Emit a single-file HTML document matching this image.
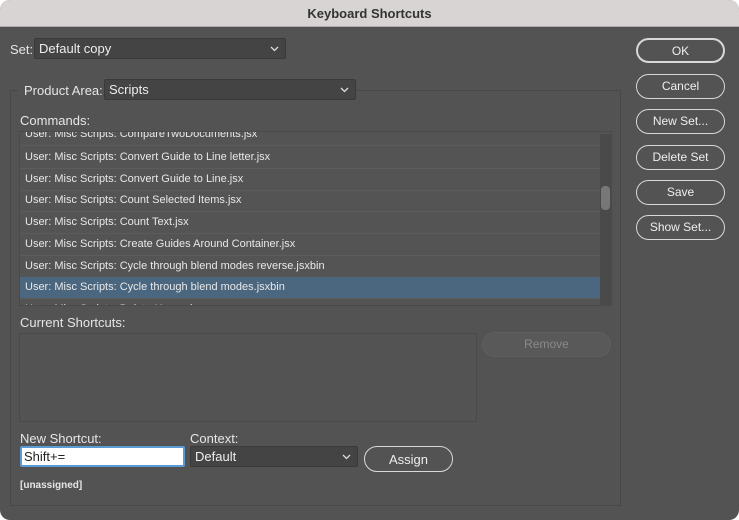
<!DOCTYPE html>
<html><head><style>
*{margin:0;padding:0;box-sizing:border-box}
body{width:739px;height:520px;background:#fff;font-family:"Liberation Sans",sans-serif;font-size:12px;color:#e6e6e6;position:relative;overflow:hidden}
.win{position:absolute;left:0;top:0;width:739px;height:520px;background:#535353;border-radius:10px;overflow:hidden}
.title{position:absolute;left:0;top:0;width:739px;height:27px;background:#d9d4d4;color:#333;font-weight:bold;font-size:13px;text-align:center;line-height:27px;border-bottom:1px solid #aaa}
.a{position:absolute;white-space:nowrap}
.dd{position:absolute;background:#444;border:1px solid #3a3a3a;border-radius:2px;color:#eee;font-size:13px;line-height:19px;padding-left:4px}
.dd svg{position:absolute;right:6px;top:7px}
.btn{position:absolute;border:1.5px solid #d8d8d8;border-radius:13px;text-align:center;color:#eee;font-size:12px}
.group{position:absolute;left:10px;top:90px;width:611px;height:416px;border:1px solid #484848}
.list{position:absolute;left:19px;top:131px;width:593px;height:175px;background:#545454;border:1px solid #4a4a4a;overflow:hidden}
.row{position:absolute;left:0;width:580px;height:21.7px;border-bottom:1px solid #5c5c5c;font-size:11px;line-height:21px;padding-left:5px;color:#e8e8e8}
.sel{background:#4b667f}
</style></head><body>
<div class="win">
<div class="title">Keyboard Shortcuts</div>
<div class="a" style="left:10px;top:42px;font-size:13px">Set:</div>
<div class="dd" style="left:34px;top:38px;width:252px;height:21px">Default copy<svg width="9" height="6"><path d="M1 1L4.5 4.5L8 1" stroke="#ddd" fill="none" stroke-width="1.3"/></svg></div>
<div class="group"></div>
<div class="a" style="left:18px;top:82px;width:86px;height:14px;background:#535353"></div>
<div class="a" style="left:24px;top:83px;font-size:13px">Product Area:</div>
<div class="dd" style="left:104px;top:79px;width:252px;height:21px">Scripts<svg width="9" height="6"><path d="M1 1L4.5 4.5L8 1" stroke="#ddd" fill="none" stroke-width="1.3"/></svg></div>
<div class="a" style="left:20px;top:113px;font-size:13px">Commands:</div>
<div class="list">
<div class="row" style="top:-8px">User: Misc Scripts: CompareTwoDocuments.jsx</div>
<div class="row" style="top:15px">User: Misc Scripts: Convert Guide to Line letter.jsx</div>
<div class="row" style="top:37px">User: Misc Scripts: Convert Guide to Line.jsx</div>
<div class="row" style="top:58px">User: Misc Scripts: Count Selected Items.jsx</div>
<div class="row" style="top:80px">User: Misc Scripts: Count Text.jsx</div>
<div class="row" style="top:102px">User: Misc Scripts: Create Guides Around Container.jsx</div>
<div class="row" style="top:124px">User: Misc Scripts: Cycle through blend modes reverse.jsxbin</div>
<div class="row sel" style="top:145px">User: Misc Scripts: Cycle through blend modes.jsxbin</div>
<div class="row" style="top:167px">User: Misc Scripts: Delete Unused...</div>
<div class="a" style="left:580px;top:2px;width:11px;height:171px;background:#4a4a4a"></div>
<div class="a" style="left:581px;top:54px;width:9px;height:24px;background:#777;border-radius:4px"></div>
</div>
<div class="a" style="left:20px;top:315px;font-size:13px">Current Shortcuts:</div>
<div class="a" style="left:19px;top:333px;width:458px;height:89px;border:1px solid #4a4a4a;background:#535353"></div>
<div class="btn" style="left:482px;top:332px;width:129px;height:25px;line-height:23px;border:1px solid #5e5e5e;background:#595959;color:#8a8a8a">Remove</div>
<div class="a" style="left:20px;top:431px;font-size:13px">New Shortcut:</div>
<div class="a" style="left:20px;top:446px;width:165px;height:21px;background:#fff;border:2px solid #5b9bd5;border-radius:2px;color:#222;font-size:13px;line-height:18px;padding-left:2px">Shift+=</div>
<div class="a" style="left:190px;top:431px;font-size:13px">Context:</div>
<div class="dd" style="left:190px;top:446px;width:168px;height:21px">Default<svg width="9" height="6"><path d="M1 1L4.5 4.5L8 1" stroke="#ddd" fill="none" stroke-width="1.3"/></svg></div>
<div class="btn" style="left:364px;top:446px;width:89px;height:26px;line-height:25px;font-size:13px">Assign</div>
<div class="a" style="left:20px;top:480px;font-size:10px;font-weight:bold">[unassigned]</div>
<div class="btn" style="left:636px;top:38px;width:89px;height:25px;line-height:23px;border-width:2px">OK</div>
<div class="btn" style="left:636px;top:74px;width:89px;height:25px;line-height:23px">Cancel</div>
<div class="btn" style="left:636px;top:109px;width:89px;height:25px;line-height:23px">New Set...</div>
<div class="btn" style="left:636px;top:145px;width:89px;height:25px;line-height:23px">Delete Set</div>
<div class="btn" style="left:636px;top:180px;width:89px;height:25px;line-height:23px">Save</div>
<div class="btn" style="left:636px;top:215px;width:89px;height:25px;line-height:23px">Show Set...</div>
</div>
</body></html>
